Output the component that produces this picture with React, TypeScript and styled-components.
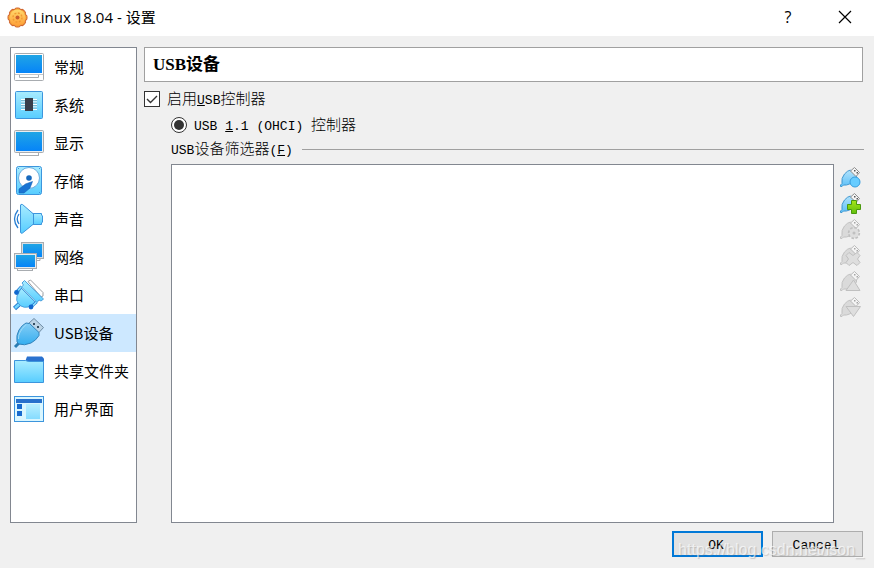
import React, { useState } from "react";
import styled, { createGlobalStyle } from "styled-components";

const GlobalStyle = createGlobalStyle`
  *, *::before, *::after { box-sizing: border-box; }
  body { margin: 0; background: #f0f0f0; }
`;

const uiFont = `"Noto Sans CJK SC", "Open Sans", sans-serif`;
const dialogFont = `"Liberation Mono", "Noto Sans CJK SC", monospace`;

const Dialog = styled.div`
  display: flex;
  flex-direction: column;
  min-height: 100vh;
  background: #f0f0f0;
  color: #000;
  font-family: ${uiFont};
`;

const TitleBar = styled.header`
  display: flex;
  align-items: center;
  height: 36px;
  padding: 0 6px 2px 7px;
  background: #fff;
`;

const Title = styled.h1`
  flex: 1;
  margin: 0 0 0 5px;
  font: 400 15px/20px "Open Sans", "Noto Sans CJK SC", sans-serif;
`;

const WindowButton = styled.button`
  display: grid;
  place-items: center;
  width: 46px;
  height: 32px;
  margin-left: 11px;
  padding: 0;
  border: 0;
  background: transparent;
  font: 16px/20px "Open Sans", sans-serif;
  color: #000;
`;

const Body = styled.div`
  display: flex;
  flex: 1;
  gap: 7px;
  padding: 11px 11px 0 10px;
`;

const Sidebar = styled.nav`
  flex: 0 0 127px;
  border: 1px solid #828790;
  background: #fff;
`;

const NavItem = styled.button<{ $active: boolean }>`
  display: flex;
  align-items: center;
  gap: 9px;
  width: 100%;
  height: 38px;
  padding: 0 0 0 2px;
  border: 0;
  background: ${(p) => (p.$active ? "#cde8ff" : "transparent")};
  color: #000;
  font: 15px/20px ${uiFont};
  text-align: left;
  white-space: nowrap;
`;

const Page = styled.main`
  display: flex;
  flex: 1;
  flex-direction: column;
  min-width: 0;
  font-family: ${dialogFont};
`;

const PageTitle = styled.h2`
  height: 35px;
  margin: 0 0 4px;
  padding: 0 8px;
  border: 1px solid #a0a0a0;
  background: #fff;
  font: 700 17px/33px "Liberation Serif", "Noto Sans CJK SC", serif;
`;

const OptionRow = styled.label<{ $nested?: boolean }>`
  display: flex;
  align-items: center;
  gap: 7px;
  height: 26px;
  padding-left: ${(p) => (p.$nested ? "27px" : "0")};
  white-space: pre;
`;

const Caption = styled.span`
  font-size: 13px;
  line-height: 20px;
`;

const Cjk = styled.span`
  font-family: "Noto Sans CJK SC", sans-serif;
  font-size: 15px;
  font-weight: 300;
`;

const TickWrap = styled.span`
  display: grid;
  width: 16px;
  height: 16px;
  & > * { grid-area: 1 / 1; }
  & > svg { pointer-events: none; }
  & > input:not(:checked) + svg { visibility: hidden; }
`;

const Tick = styled.input<{ $round?: boolean }>`
  appearance: none;
  width: 16px;
  height: 16px;
  margin: 0;
  border: 1px solid #333;
  border-radius: ${(p) => (p.$round ? "50%" : "0")};
  background: #fff;
`;

const Group = styled.section`
  display: flex;
  flex: 1;
  flex-direction: column;
  padding-left: 27px;
`;

const GroupTitle = styled.h3`
  display: flex;
  align-items: center;
  gap: 9px;
  height: 22px;
  margin: 0 -1px 4px 0;
  font-weight: 400;
  &::after {
    content: "";
    flex: 1;
    height: 1px;
    background: #a0a0a0;
  }
`;

const FilterArea = styled.div`
  display: flex;
  flex: 1;
  gap: 4px;
`;

const FilterList = styled.div`
  flex: 1;
  border: 1px solid #828790;
  background: #fff;
`;

const ToolColumn = styled.div`
  display: flex;
  flex-direction: column;
  width: 25px;
`;

const ToolButton = styled.button`
  display: grid;
  place-items: center;
  width: 24px;
  height: 26px;
  padding: 0;
  border: 0;
  background: transparent;
`;

const Footer = styled.footer`
  position: relative;
  display: flex;
  justify-content: flex-end;
  gap: 9px;
  padding: 8px 11px 11px;
`;

const PushButton = styled.button<{ $primary?: boolean }>`
  width: 91px;
  height: 26px;
  padding: 3px 3px 0 0;
  border: ${(p) => (p.$primary ? "2px solid #0078d7" : "1px solid #adadad")};
  background: #e1e1e1;
  color: #000;
  font: 13px/20px ${dialogFont};
`;

const Watermark = styled.span`
  position: absolute;
  right: 10px;
  bottom: 8px;
  color: rgba(255, 255, 255, 0.65);
  font: 16px/20px "Liberation Sans", sans-serif;
  text-shadow: 1px 1px 1px rgba(120, 120, 120, 0.35);
  pointer-events: none;
`;

const Gradients = () => (
  <svg width="0" height="0" aria-hidden="true">
    <defs>
      <linearGradient id="screen" x1="0" y1="0" x2="0" y2="1">
        <stop offset="0" stopColor="#20a5e5" />
        <stop offset="1" stopColor="#0684f8" />
      </linearGradient>
      <linearGradient id="cyan" x1="0" y1="0" x2="0" y2="1">
        <stop offset="0" stopColor="#a9ecff" />
        <stop offset="1" stopColor="#57cdff" />
      </linearGradient>
      <linearGradient id="usb" x1="0" y1="0" x2="0" y2="1">
        <stop offset="0" stopColor="#84cdf5" />
        <stop offset="1" stopColor="#35aef0" />
      </linearGradient>
      <linearGradient id="usbLight" x1="0" y1="0" x2="0" y2="1">
        <stop offset="0" stopColor="#b4e3fb" />
        <stop offset="1" stopColor="#5cc0f8" />
      </linearGradient>
      <linearGradient id="gear" x1="0" y1="0" x2="0" y2="1">
        <stop offset="0" stopColor="#ffd96c" />
        <stop offset="1" stopColor="#ffa038" />
      </linearGradient>
      <linearGradient id="green" x1="0" y1="0" x2="0" y2="1">
        <stop offset="0" stopColor="#a5e61c" />
        <stop offset="1" stopColor="#61bf0c" />
      </linearGradient>
    </defs>
  </svg>
);

const teeth = [0, 45, 90, 135, 180, 225, 270, 315];

const AppIcon = () => (
  <svg width="21" height="21" viewBox="0 0 21 21" aria-hidden="true">
    <g fill="#f4a136" stroke="#d0652f" strokeWidth="1">
      {teeth.map((a) => (
        <rect key={a} x="7.5" y="1" width="6" height="6" rx="2" transform={`rotate(${a} 10.5 10.5)`} />
      ))}
    </g>
    <circle cx="10.5" cy="10.5" r="8" fill="url(#gear)" />
    <circle cx="10.5" cy="10.5" r="4.5" fill="none" stroke="#f09a34" strokeWidth="1.4" strokeDasharray="2 1.5" />
    <circle cx="10.5" cy="10.5" r="2" fill="#c95d2c" />
  </svg>
);

const navIcons: Record<string, React.ReactNode> = {
  general: (
    <>
      <rect x="1.5" y="2.5" width="29" height="27" rx="1" fill="#fff" stroke="#a8acb0" />
      <rect x="3" y="4" width="26" height="18" fill="url(#screen)" />
      <path d="M2 23.5h28" stroke="#c4c7ca" />
      <path d="M6.5 24v2.5h19V24" fill="none" stroke="#a8acb0" />
    </>
  ),
  system: (
    <>
      <rect x="2.5" y="2.5" width="27" height="27" rx="1" fill="url(#cyan)" stroke="#3c95dd" />
      <path d="M8 10.5h16M8 13h16M8 15.5h16M8 18h16M8 20.5h16" stroke="#fff" />
      <path d="M8 11.5h16M8 14h16M8 16.5h16M8 19h16" stroke="#77a9bb" strokeWidth=".7" />
      <rect x="12" y="9" width="8" height="13" fill="#393e4a" />
    </>
  ),
  display: (
    <>
      <rect x="6.5" y="24.5" width="19" height="4" fill="#fff" stroke="#a8acb0" />
      <rect x="1.5" y="3.5" width="29" height="22" rx="1" fill="#e9edf0" stroke="#a8acb0" />
      <rect x="3" y="5" width="26" height="19" fill="url(#screen)" />
    </>
  ),
  storage: (
    <>
      <rect x="3.5" y="1.5" width="25" height="28" rx="2" fill="url(#cyan)" stroke="#3c95dd" />
      <circle cx="16" cy="13" r="10.5" fill="#fff" stroke="#6caddf" />
      <circle cx="16" cy="13" r="2.8" fill="#1769bd" />
      <path d="M19.5 16.5l-7 2.500L6 24v4h5l6-5z" fill="#1974d3" stroke="#1461b5" strokeWidth=".6" />
      <path d="M5 3.5h1M26 3.5h1M26 27.5h1" stroke="#3c95dd" />
    </>
  ),
  audio: (
    <>
      <path d="M18 10.5h10.5v1.5l1 1v6l-1 1v1.5H18z" fill="url(#cyan)" stroke="#3c95dd" />
      <path d="M7.5 2q0-1 2-.5L20.5 11v10L9.5 30q-2 .5-2-.5z" fill="url(#cyan)" stroke="#3c95dd" />
      <path d="M5 7Q-2 16 5 25M6 11Q2.5 16 6 21" fill="none" stroke="#287ed2" strokeWidth="1.3" />
    </>
  ),
  network: (
    <>
      <path d="M24 19.5h3v-2" fill="none" stroke="#a8acb0" />
      <rect x="8.5" y="1.5" width="22" height="16" fill="#d9dfe3" stroke="#a8acb0" />
      <rect x="10" y="3" width="19" height="13" fill="url(#screen)" />
      <rect x="4.5" y="26.5" width="15" height="3" fill="#fff" stroke="#a8acb0" />
      <rect x="1.5" y="12.5" width="22" height="15" fill="#e6ebee" stroke="#a8acb0" />
      <rect x="3" y="14" width="19" height="12" fill="url(#screen)" />
    </>
  ),
  serial: (
    <>
      <path d="M15 2.5L17.5 1 30 13.5V17l-2 1z" fill="#fff" stroke="#9b9fa3" strokeLinejoin="round" />
      <path d="M1.5 29.5L7 24.5" stroke="#287ed2" strokeWidth="4.5" />
      <path d="M2 29l5.5-5" stroke="#72d6ff" strokeWidth="2.5" />
      <path d="M8 9l-4 8q-1 5 1 7l3 3q3 2 7 1l8-4z" fill="url(#cyan)" stroke="#4a9fdd" />
      <path d="M8.5 7.5L3.5 13M23.5 23L18 28" stroke="#287ed2" strokeWidth="3" />
      <path d="M8.5 7.5L5 11.5M23.5 23L20 26.5" stroke="#8fe1ff" strokeWidth="1.5" />
      <path
        d="M11.500 1.500L30.500 20 28 22l-2-1-2 2.500L8.500 8l2-2L9 4z"
        fill="url(#cyan)"
        stroke="#4a9fdd"
        strokeLinejoin="round"
      />
      <circle cx="3.5" cy="13.5" r="2.4" fill="#1269cf" />
      <circle cx="18" cy="28" r="2.4" fill="#1269cf" />
    </>
  ),
  usb: (
    <>
      <path d="M21 1.500L30.500 10.500 25.500 16 15.500 6.500z" fill="#bcd4e6" stroke="#6d8ba5" strokeLinejoin="round" />
      <path d="M20 6h2v2h-2zM24 9h2v2h-2z" fill="#334d61" />
      <path d="M2 30l4-4" stroke="#297cb3" strokeWidth="3" />
      <path
        d="M4 25Q3 18 6 13q3-5 7-7l3.500.500L26 15.500v3q-3 5-8 7.500-7 3-12 1z"
        fill="url(#usb)"
        stroke="#3283bb"
        strokeLinejoin="round"
      />
      <path d="M5.500 22Q5 15 13 7.500" fill="none" stroke="#a0dbf9" />
    </>
  ),
  shared: (
    <>
      <path d="M12 7l2-5.500h15l2 2V7z" fill="#2971cf" />
      <path d="M1.500 5.500h11l3 1h15v21h-29z" fill="url(#cyan)" stroke="#3c95dd" />
    </>
  ),
  ui: (
    <>
      <rect x="1.5" y="3.5" width="29" height="25" fill="#d9f6ff" stroke="#3c95dd" />
      <rect x="3" y="6" width="26" height="4" fill="#2871cc" />
      <path d="M4 11h5v5H4zM4 18h5v5H4z" fill="#176ace" />
      <rect x="13" y="11" width="14" height="15" fill="url(#cyan)" opacity=".65" />
    </>
  ),
};

const pages = [
  ["general", "常规"],
  ["system", "系统"],
  ["display", "显示"],
  ["storage", "存储"],
  ["audio", "声音"],
  ["network", "网络"],
  ["serial", "串口"],
  ["usb", "USB设备"],
  ["shared", "共享文件夹"],
  ["ui", "用户界面"],
];

const greyMark = "#dedede";
const greyEdge = "#c0c0c0";

const toolMarks: Record<string, React.ReactNode> = {
  empty: <circle cx="15" cy="15" r="5" fill="#67ccff" stroke="#369ddd" />,
  add: <path d="M11.5 7.5h5v4h4v5h-4v4h-5v-4h-4v-5h4z" fill="url(#green)" stroke="#4a990f" />,
  edit: (
    <>
      <circle cx="14" cy="14" r="5.2" fill={greyMark} stroke={greyEdge} strokeWidth="2" strokeDasharray="2.5 1.5" />
      <circle cx="14" cy="14" r="4.5" fill={greyMark} />
      <circle cx="14" cy="14" r="1.5" fill={greyEdge} />
    </>
  ),
  remove: (
    <path
      d="M9 7.500l4 3 4-3 3 3-2.500 3.500 2.500 3.500-3 3-4-3-4 3-3-3 2.500-3.500-2.500-3.500z"
      fill={greyMark}
      stroke={greyEdge}
    />
  ),
  up: <path d="M13.5 9l6.5 10.5H6z" fill={greyMark} stroke={greyEdge} />,
  down: <path d="M6 9.500h14.500l-7 10z" fill={greyMark} stroke={greyEdge} />,
};

const ToolIcon = ({ kind, grey }: { kind: string; grey: boolean }) => (
  <svg width="21" height="21" viewBox="0 0 21 21" aria-hidden="true">
    <path
      d="M.5 19.5V18L2 16.500Q1 11 4.500 7 7.500 3.500 10.500 3l6 6v2q-2.500 4-7 6-3 1.500-6 1L2 19.500z"
      fill={grey ? "#dadada" : "url(#usbLight)"}
      stroke={grey ? "#c2c2c2" : "#4498d0"}
      strokeLinejoin="round"
    />
    <path
      d="M14.500.5l5 5-3.500 4-5.500-5.500z"
      fill="#f4f4f4"
      stroke={grey ? "#bbb" : "#8e8e8e"}
      strokeLinejoin="round"
    />
    <path d="M14 3h1.500v1.500H14zM16.500 5H18v1.500h-1.500z" fill={grey ? "#a5a5a5" : "#555"} />
    {toolMarks[kind]}
  </svg>
);

const tools: [string, string, boolean][] = [
  ["empty", "添加空筛选器", false],
  ["add", "从设备添加筛选器", false],
  ["edit", "编辑筛选器", true],
  ["remove", "删除筛选器", true],
  ["up", "上移筛选器", true],
  ["down", "下移筛选器", true],
];

export default function App() {
  const [active, setActive] = useState("usb");
  return (
    <>
      <GlobalStyle />
      <Dialog>
        <Gradients />
        <TitleBar>
          <AppIcon />
          <Title>Linux 18.04 - 设置</Title>
          <WindowButton type="button" aria-label="帮助">?</WindowButton>
          <WindowButton type="button" aria-label="关闭">
            <svg width="14" height="14" viewBox="0 0 14 14" aria-hidden="true">
              <path d="M1 1l12 12M13 1L1 13" stroke="#000" strokeWidth="1.2" />
            </svg>
          </WindowButton>
        </TitleBar>
        <Body>
          <Sidebar>
            {pages.map(([id, label]) => (
              <NavItem
                key={id}
                type="button"
                $active={id === active}
                aria-current={id === active ? "page" : undefined}
                onClick={() => setActive(id)}
              >
                <svg width="32" height="32" viewBox="0 0 32 32" aria-hidden="true">
                  {navIcons[id]}
                </svg>
                {label}
              </NavItem>
            ))}
          </Sidebar>
          <Page>
            <PageTitle>USB设备</PageTitle>
            <OptionRow>
              <TickWrap>
                <Tick type="checkbox" defaultChecked />
                <svg width="16" height="16" viewBox="0 0 16 16" aria-hidden="true">
                  <path d="M3 8l3.500 3.500L13 5" fill="none" stroke="#333" strokeWidth="1.4" />
                </svg>
              </TickWrap>
              <Caption><Cjk>启用</Cjk><u>U</u>SB<Cjk>控制器</Cjk></Caption>
            </OptionRow>
            <OptionRow $nested>
              <TickWrap>
                <Tick type="radio" name="controller" $round defaultChecked />
                <svg width="16" height="16" viewBox="0 0 16 16" aria-hidden="true">
                  <circle cx="8" cy="8" r="5" fill="#333" />
                </svg>
              </TickWrap>
              <Caption>USB <u>1</u>.1 (OHCI) <Cjk>控制器</Cjk></Caption>
            </OptionRow>
            <Group>
              <GroupTitle>
                <Caption>USB<Cjk>设备筛选器</Cjk>(<u>F</u>)</Caption>
              </GroupTitle>
              <FilterArea>
                <FilterList role="listbox" aria-label="USB设备筛选器" />
                <ToolColumn>
                  {tools.map(([kind, label, disabled]) => (
                    <ToolButton key={kind} type="button" aria-label={label} disabled={disabled}>
                      <ToolIcon kind={kind} grey={disabled} />
                    </ToolButton>
                  ))}
                </ToolColumn>
              </FilterArea>
            </Group>
          </Page>
        </Body>
        <Footer>
          <PushButton type="button" $primary>OK</PushButton>
          <PushButton type="button">Cancel</PushButton>
          <Watermark>https://blog.csdn.net/ison_</Watermark>
        </Footer>
      </Dialog>
    </>
  );
}
